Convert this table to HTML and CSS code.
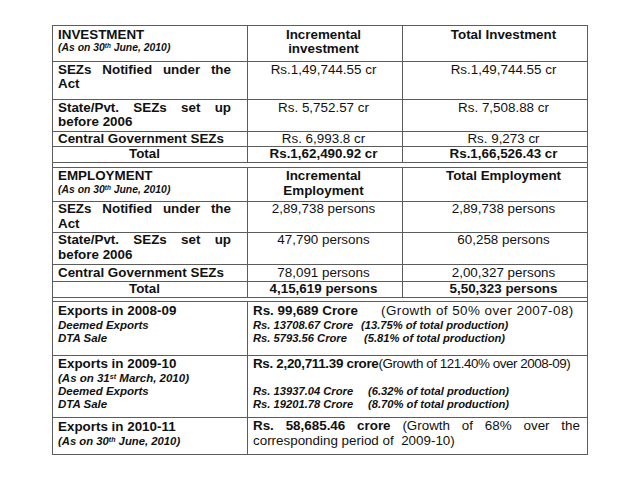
FILE: index.html
```html
<!DOCTYPE html>
<html>
<head>
<meta charset="utf-8">
<link rel="stylesheet" href="styles.css">
</head>
<body>
<table class="sez">
  <colgroup><col class="c1"><col class="c2"><col class="c3"></colgroup>
  <tr class="r-head1">
    <td class="lbl pt2"><div>INVESTMENT</div><div class="note hdr">(As on 30<sup>th</sup> June, 2010)</div></td>
    <td class="mid b pt2">Incremental<br>investment</td>
    <td class="rt b pt2">Total Investment</td>
  </tr>
  <tr class="r-38">
    <td class="lbl pt1"><div class="just">SEZs Notified under the</div><div>Act</div></td>
    <td class="mid pt1">Rs.1,49,744.55 cr</td>
    <td class="rt pt1">Rs.1,49,744.55 cr</td>
  </tr>
  <tr class="r-32">
    <td class="lbl pt1"><div class="just">State/Pvt. SEZs set up</div><div>before 2006</div></td>
    <td class="mid pt1">Rs. 5,752.57 cr</td>
    <td class="rt pt1">Rs. 7,508.88 cr</td>
  </tr>
  <tr class="r-15">
    <td class="lbl">Central Government SEZs</td>
    <td class="mid">Rs. 6,993.8 cr</td>
    <td class="rt">Rs. 9,273 cr</td>
  </tr>
  <tr class="r-16">
    <td class="lbl center">Total</td>
    <td class="mid b">Rs.1,62,490.92 cr</td>
    <td class="rt b">Rs.1,66,526.43 cr</td>
  </tr>
  <tr class="gap5"><td colspan="3"></td></tr>
  <tr class="r-34">
    <td class="lbl pt1"><div>EMPLOYMENT</div><div class="note hdr">(As on 30<sup>th</sup> June, 2010)</div></td>
    <td class="mid b pt1">Incremental<br>Employment</td>
    <td class="rt b pt1">Total Employment</td>
  </tr>
  <tr class="r-31">
    <td class="lbl"><div class="just">SEZs Notified under the</div><div>Act</div></td>
    <td class="mid">2,89,738 persons</td>
    <td class="rt">2,89,738 persons</td>
  </tr>
  <tr class="r-32">
    <td class="lbl"><div class="just">State/Pvt. SEZs set up</div><div>before 2006</div></td>
    <td class="mid">47,790 persons</td>
    <td class="rt">60,258 persons</td>
  </tr>
  <tr class="r-17">
    <td class="lbl pt1">Central Government SEZs</td>
    <td class="mid pt1">78,091 persons</td>
    <td class="rt pt1">2,00,327 persons</td>
  </tr>
  <tr class="r-16">
    <td class="lbl center">Total</td>
    <td class="mid b">4,15,619 persons</td>
    <td class="rt b">5,50,323 persons</td>
  </tr>
  <tr class="gap4"><td colspan="3"></td></tr>
  <tr class="r-54">
    <td class="lbl pt2">
      <div>Exports in 2008-09</div>
      <div class="note">Deemed Exports</div>
      <div class="note">DTA Sale</div>
    </td>
    <td class="exp pt2" colspan="2">
      <div><span class="lead1 b">Rs. 99,689 Crore</span><span class="wide">(Growth of 50% over 2007-08)</span></div>
      <div class="note prod"><span class="lead2">Rs. 13708.67 Crore</span>(13.75% of total production)</div>
      <div class="note prod"><span class="lead3">Rs. 5793.56 Crore</span>(5.81% of total production)</div>
    </td>
  </tr>
  <tr class="r-62">
    <td class="lbl pt1">
      <div>Exports in 2009-10</div>
      <div class="note">(As on 31<sup>st</sup> March, 2010)</div>
      <div class="note">Deemed Exports</div>
      <div class="note">DTA Sale</div>
    </td>
    <td class="exp pt1" colspan="2">
      <div class="nowrap"><span class="b narrow-b">Rs. 2,20,711.39 crore</span><span class="narrow">(Growth of 121.40% over 2008-09)</span></div>
      <div class="note">&nbsp;</div>
      <div class="note prod"><span class="lead4">Rs. 13937.04 Crore</span>(6.32% of total production)</div>
      <div class="note prod"><span class="lead4">Rs. 19201.78 Crore</span>(8.70% of total production)</div>
    </td>
  </tr>
  <tr class="r-37">
    <td class="lbl pt2">
      <div>Exports in 2010-11</div>
      <div class="note last">(As on 30<sup>th</sup> June, 2010)</div>
    </td>
    <td class="exp pt1" colspan="2">
      <div class="just"><span class="b">Rs. 58,685.46 crore</span> (Growth of 68% over the</div>
      <div class="tight">corresponding period of&nbsp; 2009-10)</div>
    </td>
  </tr>
</table>
</body>
</html>
```

FILE: styles.css
```css
html, body {
  margin: 0;
  padding: 0;
  background: #ffffff;
}

body {
  font-family: "Liberation Sans", Arial, sans-serif;
  color: #111111;
}

.sez {
  border-collapse: collapse;
  table-layout: fixed;
  width: 535px;
  margin: 25px 0 0 52px;
  font-size: 13.4px;
  line-height: 14.3px;
}

.c1 { width: 195px; }
.c2 { width: 155px; }
.c3 { width: 185px; }

.sez td {
  border: 1px solid #5c5c5c;
  vertical-align: top;
  padding: 0;
}

.sez td.lbl {
  padding: 0 16px 0 5px;
  font-weight: bold;
}

.sez td.mid {
  padding: 0 6px 0 3px;
  text-align: center;
}

.sez td.rt {
  padding: 0 2px 0 19px;
  text-align: center;
}

.sez td.exp {
  padding: 0 7px 0 5px;
}

.sez td.pt1 { padding-top: 1px; }
.sez td.pt2 { padding-top: 2px; }

.b { font-weight: bold; }
.center { text-align: center; }
.nowrap { white-space: nowrap; }

.just {
  text-align: justify;
  text-align-last: justify;
}

.note {
  font-size: 11.5px;
  line-height: 13.4px;
  font-weight: bold;
  font-style: italic;
}

.note.prod {
  font-size: 11.2px;
}

.note.hdr {
  font-size: 10.4px;
  line-height: 12.4px;
}

.note.last {
  font-size: 11.3px;
  line-height: 12px;
}

.tight {
  line-height: 13px;
}

.wide { letter-spacing: 0.45px; }
.narrow { letter-spacing: -0.45px; }
.narrow-b { letter-spacing: -0.3px; }

sup {
  font-size: 0.62em;
  line-height: 0;
  vertical-align: 0.45em;
}

.lead1 { display: inline-block; width: 128px; }
.lead2 { display: inline-block; width: 108px; }
.lead3 { display: inline-block; width: 111px; }
.lead4 { display: inline-block; width: 115px; }

.r-head1 { height: 36px; }
.r-38 { height: 38px; }
.r-32 { height: 32px; }
.r-15 { height: 15px; }
.r-16 { height: 16px; }
.r-17 { height: 17px; }
.r-34 { height: 34px; }
.r-31 { height: 31px; }
.r-54 { height: 54px; }
.r-62 { height: 62px; }
.r-37 { height: 37px; }
.gap5 { height: 5px; }
.gap4 { height: 4px; }
.gap5 td, .gap4 td { padding: 0; line-height: 0; font-size: 0; }
```
